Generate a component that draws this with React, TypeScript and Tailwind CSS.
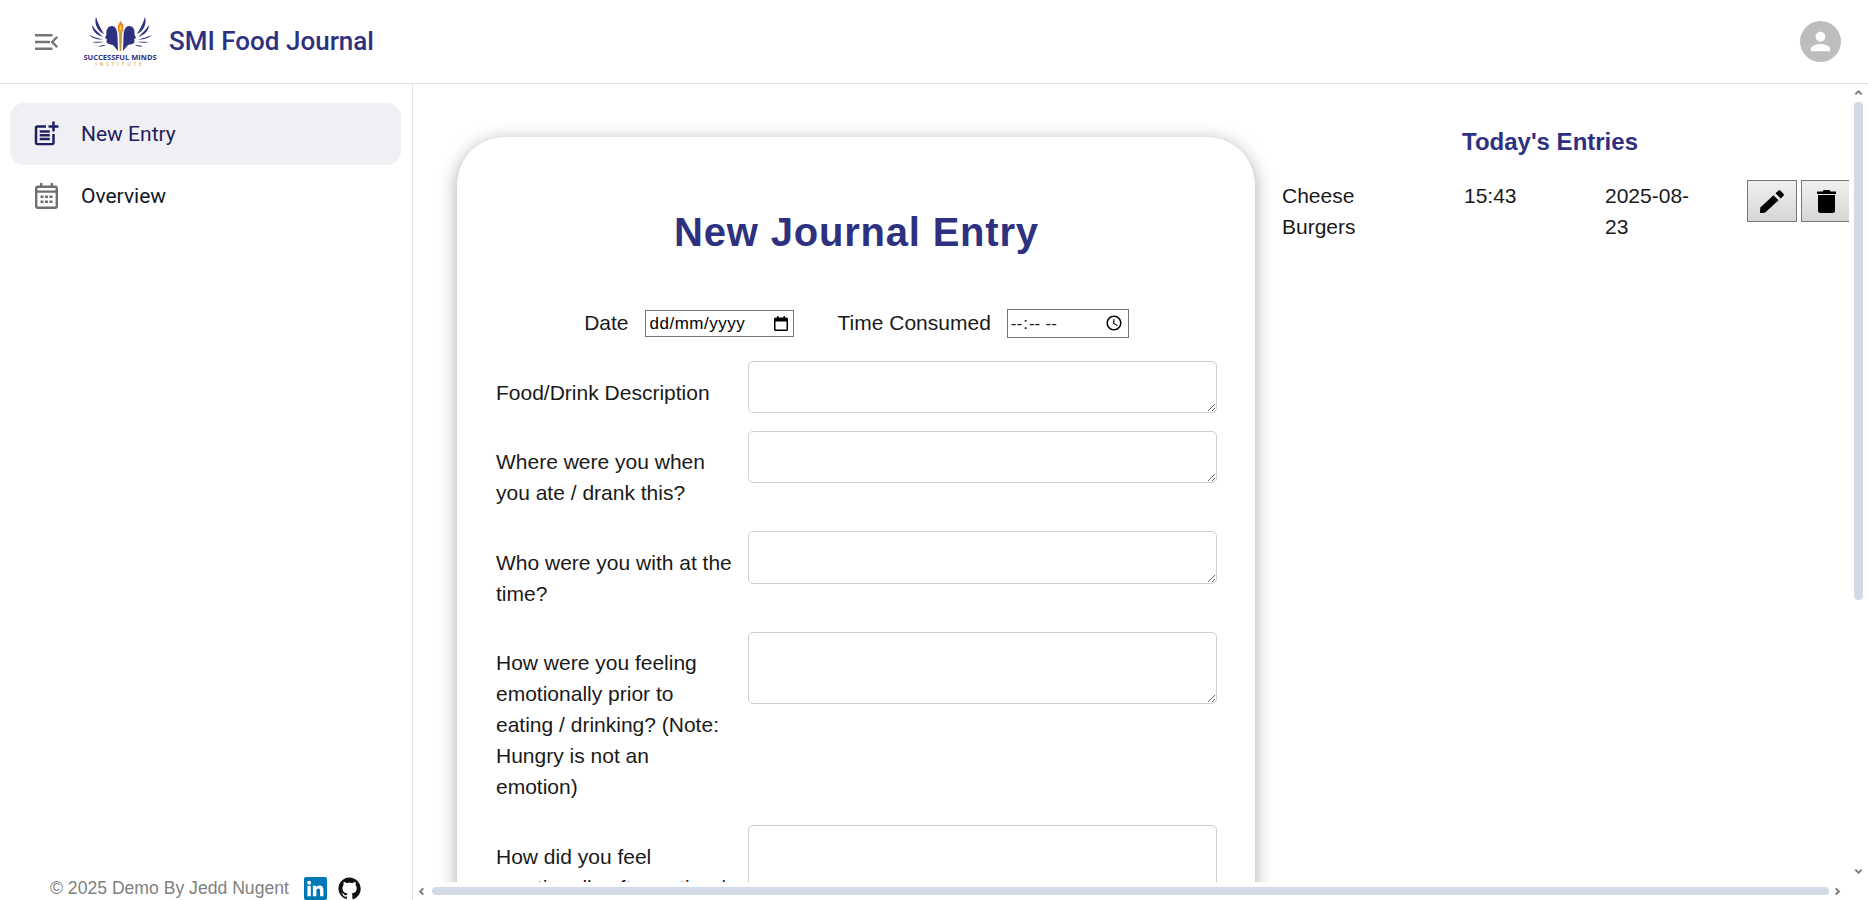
import type { ReactNode } from "react";

const entryRows = [
  { label: "Food/Drink Description", box: "h-[52px]" },
  { label: "Where were you when you ate / drank this?", box: "h-[52px]" },
  { label: "Who were you with at the time?", box: "h-[53px]" },
  { label: "How were you feeling emotionally prior to eating / drinking? (Note: Hungry is not an emotion)", box: "h-[72px]" },
  { label: "How did you feel emotionally after eating / drinking?", box: "h-[73px]" },
];

function Icon({ d, className }: { d: string; className: string }) {
  return (
    <svg viewBox="0 0 24 24" fill="currentColor" className={className}>
      <path d={d} />
    </svg>
  );
}

function WingAndHead() {
  return (
    <>
      <path d="M7 0C5 6 8 14 15 17 12 12 9 7 7 0z" />
      <path d="M3 8c0 5 4 10 11 12C10 16 6 13 3 8z" />
      <path d="M0 18c3 3 9 5 14 4.500C9 21 4 20 0 18z" />
      <path d="M3 25c3 1 7 1 12 0-5-.5-8 0-12 0z" />
      <path d="M9 29c2 1 5 .5 8-1-3 0-5 .5-8 1z" />
      <path d="M23 9c-5 0-6 5-5.500 8.500L16 21l1.800 1-.3 3c.5 2 3 2 4.500 2.500L24 28l5 6-.5-14c0-6-1.500-11-5.500-11z" />
    </>
  );
}

function Logo() {
  return (
    <div className="flex w-[78px] flex-col items-center pt-[1px]">
      <svg viewBox="0 0 63 35" className="h-[35px] w-[63px]">
        <g fill="#2e3180">
          <WingAndHead />
        </g>
        <g fill="#2e3180" transform="translate(63 0) scale(-1 1)">
          <WingAndHead />
        </g>
        <path d="M30 15h3l-.6 19h-1.800z" fill="#c9962f" />
        <path d="M28.500 13h6l-1 3h-4z" fill="#d9a441" />
        <path d="M31.500 4c2.500 2.500 3.500 5 2.500 9h-5c-1-3 .5-6 2.500-9z" fill="#ee7f24" />
        <path d="M31.500 8c1 1.500 1.500 3 1 5h-2c-.5-2 0-3.500 1-5z" fill="#f9d34c" />
      </svg>
      <span className="mt-[1px] whitespace-nowrap font-['Open_Sans',sans-serif] text-[7.500px] leading-[9px] font-bold text-[#2e3180]">
        SUCCESSFUL MINDS
      </span>
      <span className="font-['Open_Sans',sans-serif] text-[4.500px] leading-[5px] font-semibold tracking-[3px] text-[#d9a441]">
        INSTITUTE
      </span>
    </div>
  );
}

function Header() {
  return (
    <header className="flex h-[84px] shrink-0 items-center border-b border-[#e2e2e2] pr-[27px] pl-[35px]">
      <svg viewBox="0 0 23 16" fill="#757575" className="h-[16px] w-[23px]">
        <path d="M0 0h17.500v2.400H0zM0 6.800h15v2.400H0zM0 13.600h17.500V16H0z" />
        <path d="M23 3.700 18.700 8l4.300 4.300-1.600 1.600L15.500 8l5.900-5.900z" />
      </svg>
      <div className="ml-[23px]">
        <Logo />
      </div>
      <h1 className="ml-[10px] font-['Roboto',sans-serif] text-[26px] font-medium text-[#2e3180]">SMI Food Journal</h1>
      <div className="ml-auto flex h-[41px] w-[41px] items-center justify-center rounded-full bg-[#bdbdbd]">
        <Icon
          className="h-[29px] w-[29px] text-white"
          d="M12 12c2.210 0 4-1.790 4-4s-1.790-4-4-4-4 1.790-4 4 1.790 4 4 4zm0 2c-2.670 0-8 1.340-8 4v2h16v-2c0-2.660-5.330-4-8-4z"
        />
      </div>
    </header>
  );
}

function NavItem({ label, active, icon }: { label: string; active?: boolean; icon: ReactNode }) {
  return (
    <div
      className={
        active
          ? "flex h-[62px] items-center gap-[20px] rounded-[14px] bg-[#f0eff4] pl-[21px] text-[#1f2160]"
          : "flex h-[62px] items-center gap-[20px] rounded-[14px] pl-[21px] text-[#111827]"
      }
    >
      <div className="flex w-[30px] justify-center">{icon}</div>
      <span className="font-['Roboto',sans-serif] text-[21px]">{label}</span>
    </div>
  );
}

function Sidebar() {
  return (
    <aside className="flex w-[413px] shrink-0 flex-col border-r border-[#e2e2e2] pt-[19px] pr-[11px] pl-[10px]">
      <NavItem
        active
        label="New Entry"
        icon={
          <Icon
            className="h-[30px] w-[30px]"
            d="M17 19.220H5V7h7V5H5c-1.100 0-2 .9-2 2v12c0 1.100.9 2 2 2h12c1.100 0 2-.9 2-2v-7h-2v7.220zM19 2h-2v3h-3c.01.01 0 2 0 2h3v2.990c.01.01 2 0 2 0V7h3V5h-3V2zM7 9h8v2H7zM7 12v2h8v-2h-3zM7 15h8v2H7z"
          />
        }
      />
      <NavItem
        label="Overview"
        icon={
          <svg viewBox="0 0 23 26" fill="#6f6f6f" className="h-[26px] w-[23px]">
            <path d="M5 0h2.400v4H5zM15.600 0H18v4h-2.400z" />
            <path
              fillRule="evenodd"
              d="M3 2.500h17a3 3 0 0 1 3 3V23a3 3 0 0 1-3 3H3a3 3 0 0 1-3-3V5.500a3 3 0 0 1 3-3zM2.400 9.800V23c0 .4.3.6.6.6h17c.3 0 .6-.2.6-.6V9.800zM3 4.900c-.3 0-.6.2-.6.6v2h18.200v-2c0-.4-.3-.6-.6-.6z"
            />
            <path d="M5.500 12.500h3V15h-3zM10 12.500h3V15h-3zM14.500 12.500h3V15h-3zM5.500 17.500h3V20h-3zM10 17.500h3V20h-3zM14.500 17.500h3V20h-3z" />
          </svg>
        }
      />
      <footer className="mt-auto flex h-[24px] items-center pl-[40px] font-['Liberation_Sans',sans-serif] text-[17.600px] text-[#808080]">
        <span>© 2025 Demo By Jedd Nugent</span>
        <svg viewBox="0 0 24 24" className="ml-[15px] h-[23px] w-[23px] shrink-0">
          <rect width="24" height="24" rx="2" fill="#0077b5" />
          <path
            fill="#fff"
            d="M3.600 9.200h3.500V20H3.600zM5.400 4a2 2 0 1 1 0 4 2 2 0 0 1 0-4zM9.300 9.200h3.300v1.500c.5-.9 1.700-1.800 3.400-1.800 3.600 0 4.300 2.300 4.300 5.400V20h-3.500v-5c0-1.300 0-2.900-1.800-2.900s-2.100 1.400-2.100 2.800V20H9.300z"
          />
        </svg>
        <svg viewBox="0 0 24 24" className="ml-[11px] h-[23px] w-[23px] shrink-0">
          <path
            fill="#111"
            d="M12 .5C5.600.5.500 5.700.500 12.100c0 5.100 3.300 9.400 7.900 10.900.6.100.8-.2.800-.6v-2c-3.200.7-3.900-1.400-3.900-1.400-.5-1.300-1.300-1.700-1.300-1.700-1-.7.100-.7.100-.7 1.200.1 1.800 1.200 1.800 1.200 1 1.800 2.700 1.300 3.300 1 .1-.8.400-1.300.8-1.600-2.600-.3-5.300-1.300-5.300-5.700 0-1.300.4-2.300 1.200-3.100-.1-.3-.5-1.500.1-3.100 0 0 1-.3 3.200 1.200.9-.3 1.900-.4 2.900-.4s2 .1 2.900.4c2.200-1.500 3.200-1.200 3.200-1.200.6 1.600.2 2.800.1 3.100.8.800 1.200 1.900 1.200 3.100 0 4.400-2.700 5.400-5.300 5.700.4.400.8 1.100.8 2.200v3.200c0 .3.200.7.800.6 4.600-1.500 7.900-5.800 7.900-10.900C23.500 5.700 18.400.5 12 .5z"
          />
        </svg>
      </footer>
    </aside>
  );
}

function EntryForm() {
  return (
    <section className="mt-[9px] h-[1100px] w-[798px] shrink-0 rounded-[48px] bg-white pt-[72px] pr-[38px] pl-[39px] shadow-[0_4px_18px_rgba(0,0,0,0.35)]">
      <h2 className="text-center text-[40px] leading-[46px] font-bold tracking-[0.8px] text-[#2e3180]">New Journal Entry</h2>
      <div className="mt-[53px] flex h-[30px] items-center justify-center">
        <label className="mr-[16px] mb-[2px]">Date</label>
        <div className="flex h-[27px] w-[149px] items-center justify-between border border-[#767676] pr-[5px] pl-[4px] text-[17px] leading-none tracking-[0.5px] text-black">
          <span>dd/mm/yyyy</span>
          <svg viewBox="0 0 14 15" className="h-[15px] w-[14px]">
            <path
              fillRule="evenodd"
              d="M3 0h1.500v1.500h5V0H11v1.500h1.500A1.500 1.500 0 0 1 14 3v10.500a1.500 1.500 0 0 1-1.500 1.500h-11A1.500 1.500 0 0 1 0 13.500V3a1.500 1.500 0 0 1 1.500-1.500H3zM1.500 5.500v8h11v-8z"
            />
          </svg>
        </div>
        <label className="mr-[16px] mb-[2px] ml-[44px]">Time Consumed</label>
        <input type="time" className="h-[29px] w-[122px] border border-[#767676] px-[2px] text-[17px] leading-none" />
      </div>
      <div className="mt-[23px] flex flex-col gap-[16px]">
        {entryRows.map((row) => (
          <div key={row.label} className="flex items-start">
            <label className="w-[252px] shrink-0 pt-[15.500px] pr-[14px] pb-[7px]">{row.label}</label>
            <textarea className={`${row.box} min-w-0 flex-1 rounded-[5px] border border-[#cfcfcf]`} />
          </div>
        ))}
      </div>
    </section>
  );
}

function TodaysEntries() {
  const iconButton =
    "flex h-[42px] w-[50px] shrink-0 items-center justify-center border border-[#767676] bg-linear-to-b from-[#f0f0f0] to-[#d6d6d6] text-black";
  return (
    <section className="ml-[27px] w-[580px] shrink-0">
      <h3 className="ml-[-12px] w-[560px] text-center text-[24px] leading-[28px] font-bold text-[#2e3180]">Today's Entries</h3>
      <div className="mt-[24px] flex">
        <div className="w-[182px] pr-[60px]">Cheese Burgers</div>
        <div className="w-[141px]">15:43</div>
        <div className="w-[142px] pr-[40px]">2025-08-23</div>
        <div className={iconButton}>
          <svg viewBox="0 0 24 23" fill="currentColor" className="h-[23px] w-[24px]">
            <path d="M.3 17.500 13.500 5.200l5 5L5.500 22.300c-.3.3-.6.400-1 .5L1 23c-.6 0-1-.4-1-1l.3-4.500z" />
            <path d="M15.500 3.300 18.300.8c.7-.6 1.600-.6 2.200 0l2.900 3c.7.700.7 1.600 0 2.300l-2.700 2.500z" />
          </svg>
        </div>
        <div className={`${iconButton} ml-[4px]`}>
          <svg viewBox="0 0 19 23" fill="currentColor" className="h-[23px] w-[19px]">
            <path d="M6.500 0h6l1 1.500H19V4H0V1.500h5.500z" />
            <path d="M1 5h17v15.500a2.500 2.500 0 0 1-2.500 2.500h-12A2.500 2.500 0 0 1 1 20.500z" />
          </svg>
        </div>
      </div>
    </section>
  );
}

function Chevron({ d, className }: { d: string; className: string }) {
  return (
    <svg viewBox="0 0 10 10" className={className}>
      <path d={d} fill="none" stroke="#757575" strokeWidth="2" />
    </svg>
  );
}

export default function App() {
  return (
    <div className="flex h-screen w-full flex-col overflow-hidden bg-white font-['Liberation_Sans',sans-serif] text-[21px] leading-[31px] text-[#1a1a1a]">
      <Header />
      <div className="flex min-h-0 flex-1">
        <Sidebar />
        <main className="flex min-w-0 flex-1 flex-col">
          <div className="flex min-h-0 flex-1">
            <div className="min-w-0 flex-1 overflow-hidden">
              <div className="flex pt-[44px] pl-[44px]">
                <EntryForm />
                <TodaysEntries />
              </div>
            </div>
            <div className="flex w-[19px] shrink-0 flex-col items-center">
              <Chevron d="M1.500 7 5 3.500 8.500 7" className="mt-[4px] h-[9px] w-[9px]" />
              <div className="mt-[5px] h-[498px] w-[9px] rounded-[4px] bg-[#d0dbe5]" />
              <Chevron d="M1.500 3 5 6.500 8.500 3" className="mt-auto mb-[6px] h-[9px] w-[9px]" />
            </div>
          </div>
          <div className="flex h-[18px] shrink-0 items-center pl-[4px]">
            <Chevron d="M7 1.500 3.500 5 7 8.500" className="h-[9px] w-[9px]" />
            <div className="ml-[6px] h-[8px] w-[1397px] rounded-[4px] bg-[#d0dbe5]" />
            <Chevron d="M3 1.500 6.500 5 3 8.500" className="ml-[4px] h-[9px] w-[9px]" />
          </div>
        </main>
      </div>
    </div>
  );
}
